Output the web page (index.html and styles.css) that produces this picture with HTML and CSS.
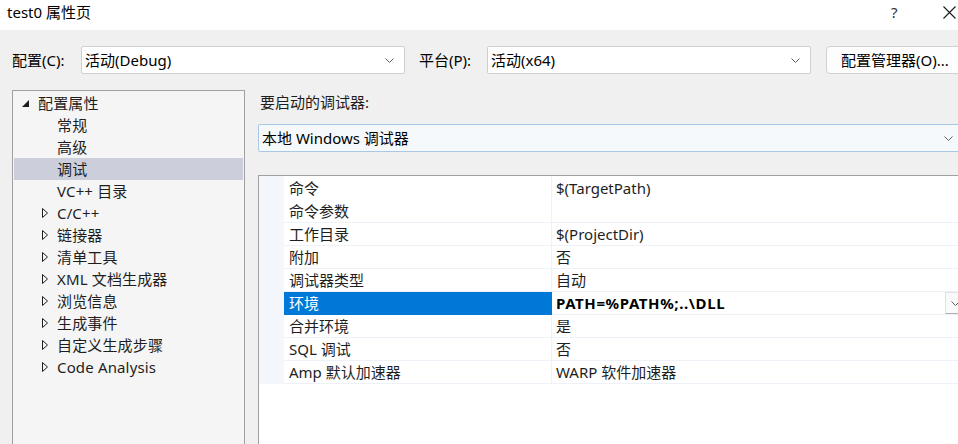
FILE: index.html
```html
<!DOCTYPE html>
<html lang="zh-CN">
<head>
<meta charset="utf-8">
<title>test0 属性页</title>
<link rel="stylesheet" href="styles.css">
</head>
<body>
<div class="window">
  <div class="titlebar">
    <span class="title">test0 属性页</span>
    <span class="help">?</span>
    <svg class="close" width="13" height="13" viewBox="0 0 13 13"><path d="M0.5 0.5 L12.5 12.5 M12.5 0.5 L0.5 12.5" stroke="#1a1a1a" stroke-width="1.1" fill="none"/></svg>
  </div>

  <div class="toolbar">
    <span class="lbl">配置(C):</span>
    <div class="combo combo-cfg">
      <span class="combo-text">活动(Debug)</span>
      <svg class="chev" width="9" height="5" viewBox="0 0 9 5"><path d="M0.5 0.5 L4.5 4.5 L8.5 0.5" stroke="#606060" fill="none"/></svg>
    </div>
    <span class="lbl lbl-plat">平台(P):</span>
    <div class="combo combo-plat">
      <span class="combo-text">活动(x64)</span>
      <svg class="chev" width="9" height="5" viewBox="0 0 9 5"><path d="M0.5 0.5 L4.5 4.5 L8.5 0.5" stroke="#606060" fill="none"/></svg>
    </div>
    <div class="btn">配置管理器(O)...</div>
  </div>

  <div class="main">
    <div class="tree">
      <div class="trow root">
        <svg class="tri-open" width="7" height="7" viewBox="0 0 7 7"><polygon points="7,0 7,7 0,7" fill="#1e1e1e"/></svg>
        <span>配置属性</span>
      </div>
      <div class="trow leaf"><span>常规</span></div>
      <div class="trow leaf"><span>高级</span></div>
      <div class="trow leaf selected"><span>调试</span></div>
      <div class="trow leaf"><span>VC++ 目录</span></div>
      <div class="trow branch"><svg class="tri" width="6" height="10" viewBox="0 0 6 10"><polygon points="0.5,0.5 5.5,5 0.5,9.5" fill="none" stroke="#1e1e1e"/></svg><span>C/C++</span></div>
      <div class="trow branch"><svg class="tri" width="6" height="10" viewBox="0 0 6 10"><polygon points="0.5,0.5 5.5,5 0.5,9.5" fill="none" stroke="#1e1e1e"/></svg><span>链接器</span></div>
      <div class="trow branch"><svg class="tri" width="6" height="10" viewBox="0 0 6 10"><polygon points="0.5,0.5 5.5,5 0.5,9.5" fill="none" stroke="#1e1e1e"/></svg><span>清单工具</span></div>
      <div class="trow branch"><svg class="tri" width="6" height="10" viewBox="0 0 6 10"><polygon points="0.5,0.5 5.5,5 0.5,9.5" fill="none" stroke="#1e1e1e"/></svg><span>XML 文档生成器</span></div>
      <div class="trow branch"><svg class="tri" width="6" height="10" viewBox="0 0 6 10"><polygon points="0.5,0.5 5.5,5 0.5,9.5" fill="none" stroke="#1e1e1e"/></svg><span>浏览信息</span></div>
      <div class="trow branch"><svg class="tri" width="6" height="10" viewBox="0 0 6 10"><polygon points="0.5,0.5 5.5,5 0.5,9.5" fill="none" stroke="#1e1e1e"/></svg><span>生成事件</span></div>
      <div class="trow branch"><svg class="tri" width="6" height="10" viewBox="0 0 6 10"><polygon points="0.5,0.5 5.5,5 0.5,9.5" fill="none" stroke="#1e1e1e"/></svg><span>自定义生成步骤</span></div>
      <div class="trow branch"><svg class="tri" width="6" height="10" viewBox="0 0 6 10"><polygon points="0.5,0.5 5.5,5 0.5,9.5" fill="none" stroke="#1e1e1e"/></svg><span>Code Analysis</span></div>
    </div>

    <div class="pane">
      <div class="pane-label">要启动的调试器:</div>
      <div class="combo combo-dbg">
        <span class="combo-text">本地 Windows 调试器</span>
        <svg class="chev" width="9" height="5" viewBox="0 0 9 5"><path d="M0.5 0.5 L4.5 4.5 L8.5 0.5" stroke="#606060" fill="none"/></svg>
      </div>

      <div class="grid">
        <div class="prow first"><div class="pm"></div><div class="pn">命令</div><div class="pd"></div><div class="pv">$(TargetPath)</div></div>
        <div class="prow"><div class="pm"></div><div class="pn">命令参数</div><div class="pd"></div><div class="pv"></div></div>
        <div class="prow"><div class="pm"></div><div class="pn">工作目录</div><div class="pd"></div><div class="pv">$(ProjectDir)</div></div>
        <div class="prow"><div class="pm"></div><div class="pn">附加</div><div class="pd"></div><div class="pv">否</div></div>
        <div class="prow"><div class="pm"></div><div class="pn">调试器类型</div><div class="pd"></div><div class="pv">自动</div></div>
        <div class="prow active"><div class="pm"></div><div class="pn">环境</div><div class="pd"></div><div class="pv"><span class="bold">PATH=%PATH%;..\DLL</span><span class="ddbtn"><svg width="9" height="5" viewBox="0 0 9 5"><path d="M0.5 0.5 L4.5 4.5 L8.5 0.5" stroke="#606060" fill="none"/></svg></span></div></div>
        <div class="prow"><div class="pm"></div><div class="pn">合并环境</div><div class="pd"></div><div class="pv">是</div></div>
        <div class="prow"><div class="pm"></div><div class="pn">SQL 调试</div><div class="pd"></div><div class="pv">否</div></div>
        <div class="prow"><div class="pm"></div><div class="pn">Amp 默认加速器</div><div class="pd"></div><div class="pv">WARP 软件加速器</div></div>
      </div>
    </div>
  </div>
</div>
</body>
</html>
```

FILE: styles.css
```css
* { box-sizing: border-box; }

html, body {
  margin: 0;
  padding: 0;
  width: 958px;
  height: 444px;
  overflow: hidden;
  background: #f0f0f0;
}

body {
  font-family: "Noto Sans", "Noto Sans CJK SC", sans-serif;
  font-size: 15px;
  line-height: 20px;
  color: #000;
}

.window {
  width: 958px;
  height: 444px;
  overflow: hidden;
}

/* title bar */
.titlebar {
  height: 30px;
  background: #ffffff;
  display: flex;
  align-items: center;
  padding: 0 2px 6px 7px;
}
.title { flex: 0 0 auto; }
.help {
  margin-left: auto;
  font-size: 15px;
  width: 8px;
  color: #333;
}
.close {
  margin-left: 44px;
  flex: 0 0 auto;
}

/* toolbar */
.toolbar {
  height: 60px;
  display: flex;
  align-items: flex-start;
  padding: 16px 0 0 12px;
  white-space: nowrap;
}
.lbl {
  width: 69px;
  height: 28px;
  line-height: 28px;
  flex: 0 0 auto;
}
.lbl-plat {
  margin-left: 14px;
  width: 68px;
}
.combo {
  height: 28px;
  background: #ffffff;
  border: 1px solid #cfcfcf;
  border-radius: 2px;
  display: flex;
  align-items: center;
  padding: 0 10px 0 3px;
  flex: 0 0 auto;
}
.combo-text { flex: 1 1 auto; }
.chev { flex: 0 0 auto; }
.combo-cfg, .combo-plat { width: 324px; }
.btn {
  margin-left: 15px;
  width: 140px;
  height: 28px;
  line-height: 26px;
  background: #fdfdfd;
  border: 1px solid #d0d0d0;
  border-radius: 4px;
  padding-left: 14px;
  flex: 0 0 auto;
}

/* main area */
.main {
  height: 354px;
  display: flex;
  padding-left: 12px;
  gap: 13px;
  overflow: hidden;
}

.tree {
  width: 233px;
  height: 380px;
  flex: 0 0 auto;
  background: #f5f5f5;
  border: 1px solid #a0a0a0;
  padding: 1px;
}
.trow {
  height: 22px;
  display: flex;
  align-items: center;
  white-space: nowrap;
  color: #1e1e1e;
}
.trow span { letter-spacing: 0.15px; }
.trow.root { padding-left: 8px; gap: 9px; }
.trow.root svg { margin-top: 1px; }
.trow.leaf { padding-left: 43px; }
.trow.branch { padding-left: 28px; gap: 9px; }
.trow.selected { background: #cccedb; }

/* right pane */
.pane {
  width: 720px;
  flex: 0 0 auto;
  display: flex;
  flex-direction: column;
}
.pane-label {
  margin-top: 2px;
  height: 20px;
  padding-left: 2px;
  color: #1e1e1e;
}
.combo-dbg {
  margin-top: 12px;
  width: 720px;
  background: #f6f9fc;
  border-color: #a9c8e6;
  padding-left: 3px;
  padding-right: 24px;
}

.grid {
  margin-top: 23px;
  flex: 1 1 auto;
  background: #ffffff;
  border-top: 1px solid #a0a0a0;
  border-left: 1px solid #a0a0a0;
}
.prow {
  display: grid;
  grid-template-columns: 25px 267px 1px 1fr;
  height: 23px;
  white-space: nowrap;
}
.prow.first { height: 24px; }
.pm { background: #f3f6fb; }
.pd { background: #eef1f7; }
.pn, .pv {
  border-bottom: 1px solid #eef1f7;
  display: flex;
  align-items: center;
  color: #1e1e1e;
}
.prow.first .pn, .prow.first .pv { border-bottom-color: #ffffff; }
.pn { padding-left: 5px; }
.pv { padding-left: 4px; }
.prow.active .pn {
  background: #0078d7;
  color: #ffffff;
  border-bottom-color: #0078d7;
}
.prow.active .pd { background: #0078d7; }
.bold {
  font-weight: bold;
  color: #000;
  letter-spacing: 0.6px;
}
.ddbtn {
  margin-left: auto;
  margin-right: 13px;
  width: 20px;
  height: 22px;
  background: #fafafa;
  border: 1px solid #e2e2e2;
  border-bottom-color: #b0b0b0;
  display: flex;
  align-items: center;
  justify-content: center;
}
```
